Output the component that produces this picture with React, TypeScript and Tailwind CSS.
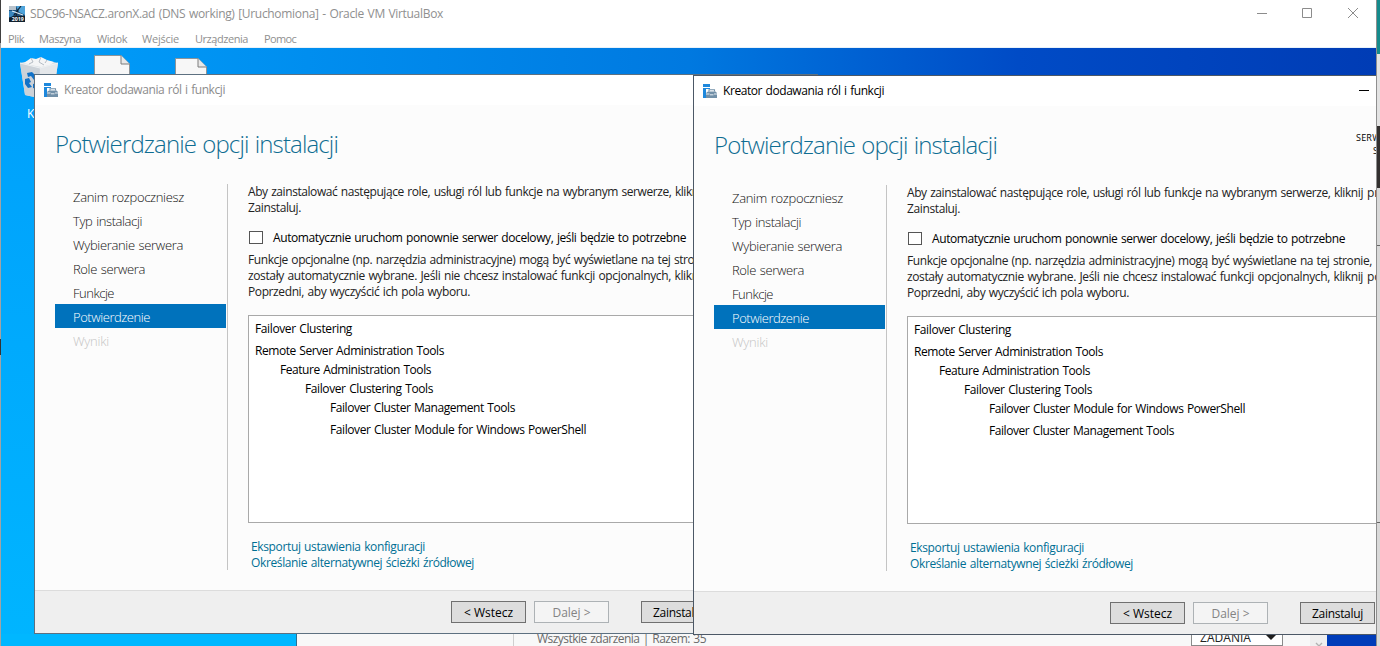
import React, { useLayoutEffect, useRef, type ReactNode } from "react";

/* Single line of text tracked so that it fills exactly `w` pixels. */
function Fit({ w, className = "", children }: { w: number; className?: string; children: string }) {
  const ref = useRef<HTMLSpanElement>(null);
  useLayoutEffect(() => {
    const el = ref.current;
    if (!el) return;
    el.style.letterSpacing = "0px";
    const natural = el.getBoundingClientRect().width;
    el.style.letterSpacing = (w - natural) / children.length + "px";
  }, [w, children]);
  return (
    <span ref={ref} className={`inline-block whitespace-pre ${className}`}>
      {children}
    </span>
  );
}

function WizardIcon() {
  return (
    <svg width="14" height="14" viewBox="0 0 14 14" className="shrink-0">
      <path d="M0 0H7V3H0Z M0 4H7V5H3V14H0Z" fill="#1e88dc" />
      <path d="M3 9L5 7.5H12.5L14 9V14H3Z" fill="#7290a8" />
      <path d="M6 7.5V5.8H11.5V7.5" fill="none" stroke="#7290a8" strokeWidth="1.1" />
      <path d="M3 10H6.5M11 10H14M7 10.8H10.5" stroke="#f2f6f9" strokeWidth="0.9" fill="none" />
    </svg>
  );
}

const steps: [string, number][] = [
  ["Zanim rozpoczniesz", 111],
  ["Typ instalacji", 69],
  ["Wybieranie serwera", 110],
  ["Role serwera", 72],
  ["Funkcje", 41],
  ["Potwierdzenie", 77],
  ["Wyniki", 36],
];

function Steps() {
  return (
    <nav className="w-[171px] shrink-0 text-[13px] font-light">
      {steps.map(([name, w], i) => (
        <div
          key={name}
          className={`flex h-6 items-center pl-[18px] pt-px ${
            i === 5 ? "bg-[#0072bc] text-white" : i === 6 ? "text-[#c4c4c4]" : "text-[#111]"
          }`}
        >
          <Fit w={w}>{name}</Fit>
        </div>
      ))}
    </nav>
  );
}

function WizardButton({ label, w, disabled, className = "" }: { label: string; w: number; disabled?: boolean; className?: string }) {
  return (
    <button
      className={`flex h-[22px] w-[75px] shrink-0 items-center justify-center border pt-px ${
        disabled ? "border-[#adb2b5] bg-[#f4f4f4] text-[#838383]" : "border-[#707070] bg-[#dddddd] text-black"
      } ${className}`}
    >
      <Fit w={w}>{label}</Fit>
    </button>
  );
}

type Feature = { name: string; w: number; cls: string };

function Wizard({ active, features, className }: { active?: boolean; features: Feature[]; className: string }) {
  return (
    <section
      className={`absolute flex h-[560px] flex-col overflow-hidden border bg-[#fcfcfc] text-xs leading-4 ${className}`}
    >
      <header className="flex h-[30px] shrink-0 items-center bg-white pl-[9px]">
        <WizardIcon />
        <Fit w={161} className={`ml-1.5 ${active ? "text-black" : "text-[#8c8c8c]"}`}>
          Kreator dodawania ról i funkcji
        </Fit>
        {active && <span className="mb-px ml-[475px] h-px w-2.5 shrink-0 bg-black" />}
      </header>
      <div className="flex h-[79px] shrink-0 pl-5">
        <h1 className="mt-[23px] text-2xl leading-8 font-light text-[#0f6d92]">
          <Fit w={283}>Potwierdzanie opcji instalacji</Fit>
        </h1>
        <div className="ml-[359px] flex w-[90px] shrink-0 flex-col items-end pt-[25px] text-[9px] leading-[13px] whitespace-nowrap text-black">
          <Fit w={90}>SERWER DOCELOWY</Fit>
          <span className="w-[73px]">SDC96-NSACZ</span>
        </div>
      </div>
      <div className="flex h-[406px] shrink-0 pl-5">
        <Steps />
        <div className="ml-px h-[386px] w-px shrink-0 bg-[#c4c4c4]" />
        <main className="ml-5 w-[560px] shrink-0 text-[#222]">
          <p className="whitespace-nowrap">
            <Fit w={456}>Aby zainstalować następujące role, usługi ról lub funkcje na wybranym serwerze, kliknij</Fit>
            <Fit w={49}>{" przycisk"}</Fit>
            <br />
            <Fit w={53}>Zainstaluj.</Fit>
          </p>
          <label className="mt-3.5 flex h-4 items-center text-black">
            <span className="mb-px ml-px h-[13px] w-3.5 border border-[#555] bg-white" />
            <Fit w={413} className="ml-2.5">
              Automatycznie uruchom ponownie serwer docelowy, jeśli będzie to potrzebne
            </Fit>
          </label>
          <p className="mt-1.5 whitespace-nowrap">
            <Fit w={465}>Funkcje opcjonalne (np. narzędzia administracyjne) mogą być wyświetlane na tej stronie,</Fit> ponieważ
            <br />
            <Fit w={456}>zostały automatycznie wybrane. Jeśli nie chcesz instalować funkcji opcjonalnych, kliknij</Fit>
            <Fit w={46}>{" pozycję"}</Fit>
            <br />
            <Fit w={222}>Poprzedni, aby wyczyścić ich pola wyboru.</Fit>
          </p>
          <ul className="mt-[15px] h-[208px] border border-[#a9a9a9] bg-white pt-[5px] text-black">
            {features.map((f) => (
              <li key={f.name} className={`flex ${f.cls}`}>
                <Fit w={f.w}>{f.name}</Fit>
              </li>
            ))}
          </ul>
          <div className="mt-4 flex flex-col items-start pl-[3px] text-[#006f94]">
            <Fit w={174}>Eksportuj ustawienia konfiguracji</Fit>
            <Fit w={223}>Określanie alternatywnej ścieżki źródłowej</Fit>
          </div>
        </main>
      </div>
      <footer className="flex grow items-start border-t border-[#dcdcdc] bg-[#efefef] pt-2.5 pl-[416px]">
        <WizardButton label="< Wstecz" w={49} />
        <WizardButton label="Dalej >" w={38} disabled className="ml-2" />
        <WizardButton label="Zainstaluj" w={51} className="ml-8" />
      </footer>
    </section>
  );
}

const common: Feature[] = [
  { name: "Failover Clustering", w: 97, cls: "pl-1.5 mb-1.5" },
  { name: "Remote Server Administration Tools", w: 189, cls: "pl-1.5 mb-[3px]" },
  { name: "Feature Administration Tools", w: 151, cls: "pl-[31px] mb-[3px]" },
  { name: "Failover Clustering Tools", w: 128, cls: "pl-14 mb-[3px]" },
];
const management: Feature = { name: "Failover Cluster Management Tools", w: 185, cls: "pl-[81px] mb-1.5" };
const powershell: Feature = { name: "Failover Cluster Module for Windows PowerShell", w: 256, cls: "pl-[81px] mb-1.5" };

function RecycleBin() {
  return (
    <svg width="40" height="44" viewBox="0 0 40 44" className="absolute top-[7px] left-[18px]">
      <path d="M1 8L20 4L39 8L34 41L20 43L6 40Z" fill="#d9dee3" />
      <path d="M1 8L21 13L20 43L6 40Z" fill="#ccd2d8" />
      <path d="M21 13L39 8L34 41L20 43Z" fill="#e4e7ea" />
      <path d="M5 8L12 3L17 4L22 2L28 5L35 7L31 10L22 12L12 10Z" fill="#f4f5f6" />
      <path d="M12 3L14 7L10 9M22 2L20 7L25 10M28 5L26 8" stroke="#b4bcc4" fill="none" />
      <path d="M1 8L21 13L39 8" stroke="#eef1f3" fill="none" />
      <path d="M8 18L13 17L17 21L15 25L12 21L9 22Z" fill="#1272c8" />
      <path d="M6 24L10 23L12 27L10 28L13 32L9 33L6 29Z" fill="#1272c8" />
      <path d="M14 29L18 28V34L14 33Z" fill="#1272c8" />
    </svg>
  );
}

function Sheet({ className, w, h }: { className: string; w: number; h: number }) {
  return (
    <svg width={w} height={h} viewBox={`0 0 ${w} ${h}`} className={`absolute ${className}`}>
      <path d={`M.5 ${h}V.5H${w - 9}L${w - 0.5} 9V${h}Z`} fill="#f7f7f7" stroke="#8d9499" />
      <path d={`M${w - 9} .5V9H${w - 0.5}`} fill="#e8e8e8" stroke="#7d7d7d" />
    </svg>
  );
}

function MachineIcon() {
  return (
    <svg width="16" height="16" viewBox="0 0 16 16" className="shrink-0">
      <rect width="16" height="16" fill="#1d4f78" />
      <path d="M0 0H7V4H0Z" fill="#b9c3cc" />
      <path d="M7 0H16V9L10 6Z" fill="#4fa3da" />
      <path d="M0 5H7L3 11H0Z" fill="#3a86bd" />
      <path d="M12 0L5 9M9 4L7 10" stroke="#0f2233" strokeWidth="1.2" />
      <path d="M3 5L14 9" stroke="#dbeaf5" strokeWidth="1.1" />
      <path d="M0 12L4 10H16V16H0Z" fill="#10202e" />
      <text x="2.8" y="14.6" fontSize="5.2" fontWeight="700" fill="#fff">2019</text>
    </svg>
  );
}

const menu: [string, number, string][] = [
  ["Plik", 16, "w-[31px]"],
  ["Maszyna", 42, "w-[58px]"],
  ["Widok", 30, "w-[45px]"],
  ["Wejście", 37, "w-[53px]"],
  ["Urządzenia", 53, "w-[69px]"],
  ["Pomoc", 32, "w-10"],
];

function Row({ children, className }: { children: ReactNode; className: string }) {
  return <div className={`flex shrink-0 ${className}`}>{children}</div>;
}

export default function App() {
  return (
    <div className="flex h-[646px] w-[1380px] overflow-hidden bg-white font-['Open_Sans','Noto_Sans',sans-serif] text-xs [word-spacing:0.8px]">
      <div className="flex w-px shrink-0 flex-col bg-[#a3a3a3]">
        <div className="h-[43px] bg-[#404040]" />
        <div className="mt-[296px] h-4 bg-[#333]" />
      </div>
      <div className="flex w-[1375px] shrink-0 flex-col overflow-hidden">
        <Row className="h-[27px] items-center pl-2 text-[#8f8f8f]">
          <MachineIcon />
          <Fit w={413} className="ml-[5px]">SDC96-NSACZ.aronX.ad (DNS working) [Uruchomiona] - Oracle VM VirtualBox</Fit>
          <svg width="104" height="12" viewBox="0 0 104 12" className="mb-px ml-[814px] shrink-0" fill="none" stroke="#8c8c8c">
            <path d="M0 6.5H10M45.5 1.5H54.5V10.5H45.5Z" />
            <path d="M91 1L101 11M101 1L91 11" />
          </svg>
        </Row>
        <Row className="h-[21px] items-center border-b border-[#e8f2fa] pl-[7px] pt-1 text-[11px] text-[#8f8f8f]">
          {menu.map(([name, w, cls]) => (
            <span key={name} className={cls}>
              <Fit w={w}>{name}</Fit>
            </span>
          ))}
        </Row>
        <div className="relative h-[598px] shrink-0 overflow-hidden bg-[linear-gradient(to_right,#009ffb,#0079e0_50%,#004bc6_74%,#003cb5)]">
          <div className="absolute top-0 left-0 h-full w-[34px] bg-linear-to-b from-[#009ffb] to-[#00b5ff]" />
          <RecycleBin />
          <span className="absolute top-[58px] left-[26px] leading-4 text-white">Kosz</span>
          <Sheet className="top-[7px] left-[93px]" w={36} h={22} />
          <Sheet className="top-[10px] left-[174px]" w={32} h={20} />
          <div className="absolute bottom-0 left-0 flex h-3 w-full bg-[#003cb9]">
            <div className="w-[295px] shrink-0 bg-[#00b7ff]" />
            <div className="flex w-[1031px] shrink-0 overflow-hidden border-l border-[#2a6f93] bg-[#f8f8f8]">
              <div className="w-[217px] shrink-0 border-r border-[#cfcfcf]" />
              <Fit w={169} className="-mt-[3px] ml-[23px] h-4 leading-4 text-[#6a6a6a]">Wszystkie zdarzenia | Razem: 35</Fit>
              <div className="-mt-2.5 ml-[485px] flex h-[22px] w-[92px] shrink-0 items-center border border-[#8a8a8a] bg-white pt-[5px] pl-2 text-[#222]">
                <Fit w={51}>ZADANIA</Fit>
                <svg width="10" height="5" viewBox="0 0 10 5" className="ml-[15px]">
                  <path d="M0 0H10L5 5Z" fill="#1e1e1e" />
                </svg>
              </div>
              <div className="ml-[27px] flex w-[17px] shrink-0 items-end justify-center bg-[#efefef]">
                <svg width="8" height="4" viewBox="0 0 8 4">
                  <path d="M1 1L4 4L7 1" fill="none" stroke="#b0b0b0" strokeWidth="1.3" />
                </svg>
              </div>
            </div>
          </div>
          <Wizard features={[...common, management, powershell]} className="top-[26px] left-[33px] w-[784px] border-[#5d7080]" />
          <Wizard
            active
            features={[...common, powershell, management]}
            className="top-[27px] left-[692px] w-[760px] border-[#4c5866]"
          />
        </div>
      </div>
      <div className="flex w-1 shrink-0 flex-col border-l border-[#8f8f8f] bg-[#d9d9d9]">
        <div className="h-[54px] bg-[#158a8c]" />
        <div className="h-[72px] bg-[#e3e3e3]" />
        <div className="h-[62px] bg-[#33302f]" />
        <div className="h-[57px]" />
        <div className="h-px bg-[#666]" />
        <div className="h-[276px]" />
        <div className="h-px bg-[#666]" />
      </div>
    </div>
  );
}
